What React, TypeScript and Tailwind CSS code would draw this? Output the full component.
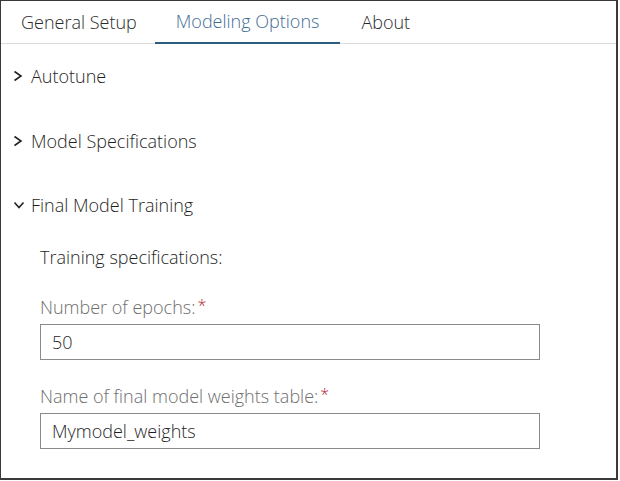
import React from "react";

const font = { fontFamily: "'Open Sans', 'Noto Sans', sans-serif" };

function ChevronRight() {
  return (
    <svg width="10" height="14" viewBox="0 0 10 14" className="mr-[8px] shrink-0">
      <path d="M1.5 2.5 L8 7 L1.5 11.5" fill="none" stroke="#222" strokeWidth="1.6" />
    </svg>
  );
}

function ChevronDown() {
  return (
    <svg width="12" height="10" viewBox="0 0 12 10" className="mr-[6px] shrink-0">
      <path d="M1.5 2.5 L6 7.5 L10.5 2.5" fill="none" stroke="#222" strokeWidth="1.6" />
    </svg>
  );
}

function Section({ title, open }: { title: string; open?: boolean }) {
  return (
    <div className="flex h-[24px] items-center pl-[12px] text-[18px] font-light text-[#1f1f1f]">
      {open ? <ChevronDown /> : <ChevronRight />}
      <span>{title}</span>
    </div>
  );
}

function Field({ label, value }: { label: string; value: string }) {
  return (
    <div className="flex flex-col">
      <div className="flex h-[24px] items-center text-[18px] font-light text-[#6e6e6e]">
        {label}
        <span className="ml-[2px] -mt-[4px] text-[16px] text-[#b02a37]">*</span>
      </div>
      <div className="mt-[5px] flex h-[36px] w-[500px] items-center border border-[#8a8a8a] px-[11px] text-[18px] font-light text-[#1f1f1f]">
        {value}
      </div>
    </div>
  );
}

export default function App() {
  return (
    <div
      style={font}
      className="h-[480px] w-[618px] border-t border-l border-r-2 border-b-2 border-[#3a3a3a] bg-white"
    >
      <div className="flex h-[43px] border-b border-[#dcdcdc] text-[18px] font-light">
        <div className="flex items-center pl-[20px] pr-[18px] text-[#2a2a2a]">General Setup</div>
        <div className="-mb-px flex items-center border-b-2 border-[#2c5d80] px-[21px] text-[#3f6d96]">
          Modeling Options
        </div>
        <div className="flex items-center px-[21px] text-[#2a2a2a]">About</div>
      </div>

      <div className="mt-[20px] flex flex-col">
        <Section title="Autotune" />
        <div className="mt-[41px]">
          <Section title="Model Specifications" />
        </div>
        <div className="mt-[40px]">
          <Section title="Final Model Training" open />
        </div>

        <div className="mt-[28px] flex flex-col pl-[39px]">
          <div className="flex h-[24px] items-center text-[18px] font-light text-[#1f1f1f]">
            Training specifications:
          </div>
          <div className="mt-[26px]">
            <Field label="Number of epochs:" value="50" />
          </div>
          <div className="mt-[24px]">
            <Field label="Name of final model weights table:" value="Mymodel_weights" />
          </div>
        </div>
      </div>
    </div>
  );
}
